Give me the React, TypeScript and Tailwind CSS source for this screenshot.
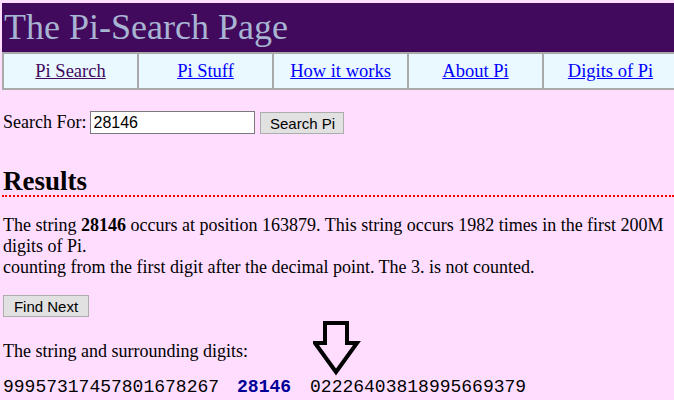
export default function App() {
  const tabs = [
    { label: "Pi Search", visited: true },
    { label: "Pi Stuff" },
    { label: "How it works" },
    { label: "About Pi" },
    { label: "Digits of Pi" },
  ]

  return (
    <div className="h-[400px] w-[674px] overflow-hidden bg-[#ffddff] pl-[2px] pt-[3px] font-['Liberation_Serif',serif] text-[18px] text-black">
      {/* Title bar */}
      <div className="h-[49px] w-[677px] bg-[#420a5c] pl-[2px] pt-[3px] text-[36px] leading-[42px] text-[#a7b5d3]">
        The Pi-Search Page
      </div>

      {/* Nav table */}
      <div className="flex h-[38px] w-[677px] border-2 border-[#a9a9a9] bg-[#eaf8ff]">
        {tabs.map((tab, i) => (
          <div
            key={tab.label}
            className={`flex flex-1 items-center justify-center pt-[2px] text-[18.5px] ${i > 0 ? "border-l-2 border-[#a9a9a9]" : ""}`}
          >
            <a href="#" className={`underline ${tab.visited ? "text-[#400a5c]" : "text-[#0000ff]"}`}>
              {tab.label}
            </a>
          </div>
        ))}
      </div>

      {/* Search form */}
      <div className="mt-[19px] flex items-center pl-[1px]">
        <span>Search For:</span>
        <input
          readOnly
          value="28146"
          className="ml-[4px] h-[23px] w-[165px] border border-[#7a7a7a] bg-white px-[2px] font-['Liberation_Sans',sans-serif] text-[16px] outline-none"
        />
        <button className="ml-[5px] h-[22px] w-[84px] border border-[#adadad] bg-[#e1e1e1] font-['Liberation_Sans',sans-serif] text-[15px]">
          Search Pi
        </button>
      </div>

      {/* Results */}
      <h2 className="mt-[31px] border-b-2 border-dotted border-[#ff0000] pl-[1px] text-[27px] font-bold leading-[28px]">
        Results
      </h2>

      <p className="mt-[18px] pl-[1px] pr-[4px] leading-[21px]">
        The string <b>28146</b> occurs at position 163879. This string occurs 1982 times in the first 200M digits of Pi.
        <br />
        counting from the first digit after the decimal point. The 3. is not counted.
      </p>

      <button className="ml-[1px] mt-[17px] h-[22px] w-[86px] border border-[#adadad] bg-[#e1e1e1] font-['Liberation_Sans',sans-serif] text-[15px]">
        Find Next
      </button>

      <div className="mt-[1px] flex items-end pl-[1px]">
        <span className="mb-[15px] w-[310px] leading-[21px]">The string and surrounding digits:</span>
        <svg width="50" height="56" viewBox="0 0 50 56">
          <path
            d="M12 2 H34 V22 H44 L23 51 L2 22 H12 Z"
            fill="none"
            stroke="#000"
            strokeWidth="4"
            strokeLinejoin="miter"
          />
        </svg>
      </div>

      <div className="flex whitespace-pre pl-[1px] font-['Liberation_Mono',monospace] text-[18px] leading-[20px]">
        <span>99957317457801678267</span>
        <b className="ml-[18px] text-[#000099]">28146</b>
        <span className="ml-[19px]">02226403818995669379</span>
      </div>
    </div>
  )
}
